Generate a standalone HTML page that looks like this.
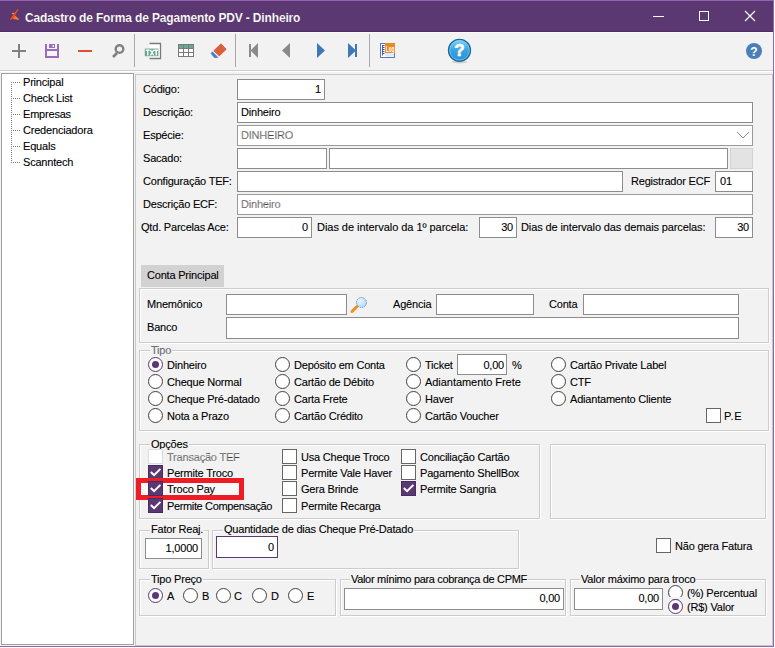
<!DOCTYPE html>
<html><head><meta charset="utf-8">
<style>
*{box-sizing:border-box;margin:0;padding:0}
html,body{width:775px;height:648px;overflow:hidden;background:#fff}
body{position:relative;font-family:"Liberation Sans",sans-serif;font-size:11px;color:#000}
.a{position:absolute}
.t{position:absolute;white-space:pre;font-size:11px;line-height:13px;letter-spacing:-0.2px;color:#000;-webkit-text-stroke:0.1px #000}
.in{position:absolute;background:#fff;border:1px solid #8c8c8c}
.g{position:absolute;border:1px solid #cccccc;box-shadow:inset 1px 1px 0 #fff,1px 1px 0 #fff}
.cap{position:absolute;white-space:pre;font-size:11px;line-height:13px;letter-spacing:-0.2px;color:#000;-webkit-text-stroke:0.1px #000;background:#f2f2f2;padding:0 1px}
.rd{position:absolute;width:15px;height:15px;border-radius:50%;border:1px solid #404040;background:#fff}
.rs{position:absolute;width:15px;height:15px;border-radius:50%;border:1px solid #5c3872;background:#fff}
.rs::after{content:"";position:absolute;left:3px;top:3px;width:7px;height:7px;border-radius:50%;background:#5c3872}
.cb{position:absolute;width:15px;height:15px;border:1px solid #666;background:#fff}
.ck{position:absolute;width:15px;height:15px;background:#5c3872;border:1px solid #4a2a62}
.ck svg{position:absolute;left:-1px;top:-1px}
.sep{position:absolute;width:1px;background:#a8a8a8;top:34px;height:33px}
.r{text-align:right}
</style></head><body>
<!-- window background -->
<div class="a" style="left:0;top:0;width:773px;height:646px;background:#f2f2f2"></div>
<!-- title bar -->
<div class="a" style="left:0;top:0;width:773px;height:32px;background:#5c3872;border-top:1px solid #9660b8;border-bottom:1px solid #4f2e66"></div>
<div class="a" style="left:0;top:32px;width:773px;height:1px;background:#fafafa"></div>
<div class="a" style="left:773px;top:0;width:1px;height:647px;background:#9660b8"></div>
<div class="a" style="left:0;top:646px;width:774px;height:1px;background:#9660b8"></div>
<svg class="a" style="left:6px;top:6px" width="18" height="18" viewBox="6 6 18 18">
<defs><linearGradient id="lg" x1="0" y1="0" x2="1" y2="0"><stop offset="0" stop-color="#f04a22"/><stop offset="1" stop-color="#fbbd1e"/></linearGradient></defs>
<path d="M12.2 18.9 L14.6 15 L19.4 19.7 Z" fill="url(#lg)"/>
<path d="M11.3 13.6 Q12.6 12.4 14.8 13.1 L14.2 14.3 Z" fill="#f9b01e"/>
<path d="M17.6 8.9 L18.5 9.7 L14.8 15.4 L10.9 20 L9.9 19.3 L13.4 14.6 Z" fill="#f24c22"/>
</svg>
<div class="t" style="left:25px;top:11px;font-size:12px;font-weight:bold;color:#fff;line-height:14px;letter-spacing:-0.15px">Cadastro de Forma de Pagamento PDV - Dinheiro</div>
<!-- window controls -->
<div class="a" style="left:653px;top:16px;width:11px;height:1px;background:#fff"></div>
<div class="a" style="left:699px;top:11px;width:10px;height:10px;border:1px solid #fff"></div>
<svg class="a" style="left:744px;top:10px" width="12" height="12" viewBox="0 0 12 12"><path d="M1 1 L11 11 M11 1 L1 11" stroke="#fff" stroke-width="1.2"/></svg>

<!-- toolbar -->
<svg class="a" style="left:0;top:33px" width="773" height="40" viewBox="0 33 773 40">
<!-- plus -->
<rect x="12" y="50" width="14" height="2" fill="#808080"/><rect x="18" y="44" width="2" height="14" fill="#808080"/>
<!-- save -->
<rect x="45" y="44" width="14" height="14" fill="#9a6cbc"/>
<rect x="47" y="51" width="10" height="5" fill="#f4f4f4"/>
<rect x="47" y="44" width="10" height="5" fill="#f4f4f4"/>
<rect x="49" y="44" width="6" height="4" fill="#9a6cbc"/>
<rect x="52.5" y="45" width="1.5" height="2" fill="#f4f4f4"/>
<!-- minus -->
<rect x="78" y="50" width="14" height="2" fill="#dc5030"/>
<!-- search -->
<circle cx="119.5" cy="49" r="3.8" fill="none" stroke="#808080" stroke-width="2.4"/>
<path d="M113 57 L117 53" stroke="#808080" stroke-width="2.6"/>
<!-- TXT -->
<path d="M149.5 43.5 H160.5 V58.5 H149.5" fill="#fff" stroke="#7a7a7a" stroke-width="1.3"/>
<rect x="144.8" y="48.6" width="13.6" height="7.6" fill="#6aa88e"/>
<path d="M145.8 50.3 H149.6 M147.7 50.3 V55.5 M150.4 49.8 L153.8 55.5 M153.8 49.8 L150.4 55.5 M154.3 50.3 H158.1 M156.2 50.3 V55.5" stroke="#fff" stroke-width="1.4" fill="none"/>
<!-- grid -->
<rect x="178.5" y="44.5" width="15" height="12" fill="#fff" stroke="#7a7a7a"/>
<rect x="179" y="45" width="14" height="3" fill="#6aa88e"/>
<path d="M178.5 48.5 H193.5 M178.5 52.5 H193.5 M183.5 44.5 V56.5 M188.5 44.5 V56.5" stroke="#7a7a7a"/>
<!-- eraser -->
<path d="M214.2 50.8 L221 44.2 L225.8 49.2 L219.2 55.6 Z" fill="#d95f3e" stroke="#d95f3e" stroke-width="1.2" stroke-linejoin="round"/><path d="M211 53.3 L212.4 51.8 L218 57.6 L214.2 57.6 Z" fill="#3f7dc0" stroke="#3f7dc0" stroke-width="0.6" stroke-linejoin="round"/>
<!-- nav -->
<rect x="249" y="44" width="2" height="13" fill="#8a8a8a"/><path d="M250.5 50.5 L258 43 V58 Z" fill="#8a8a8a"/>
<path d="M282 50.5 L290 43 V58 Z" fill="#8a8a8a"/>
<path d="M317 43 L325 50.5 L317 58 Z" fill="#3e78b8"/>
<path d="M348 43 L356 50.5 L348 58 Z" fill="#3e78b8"/><rect x="355" y="44" width="2" height="13" fill="#3e78b8"/>
<!-- log -->
<rect x="380.5" y="43.5" width="14" height="14" fill="#fff" stroke="#5a78c0"/>
<rect x="385" y="53" width="9" height="3.5" fill="#dde8f8"/>
<path d="M382.5 45 V55.5" stroke="#4060b0" stroke-width="1"/><path d="M383 45.5 H384.5 M383 47.5 H384.5 M383 49.5 H384.5 M383 51.5 H384.5 M383 53.5 H384.5" stroke="#3050a0" stroke-width="1"/>
<rect x="385" y="43" width="10" height="10" fill="#e88a20"/>
<text x="385.8" y="51.6" font-family="Liberation Sans" font-size="9" font-weight="bold" fill="#fff" textLength="8.6" lengthAdjust="spacingAndGlyphs">Log</text>
<!-- help big -->
<defs><linearGradient id="hb" x1="0" y1="0" x2="0" y2="1"><stop offset="0" stop-color="#7fd4f6"/><stop offset="0.5" stop-color="#3aa4e0"/><stop offset="1" stop-color="#2d8ed2"/></linearGradient></defs>
<ellipse cx="459.5" cy="62" rx="8" ry="1.5" fill="#d8d0c8"/>
<circle cx="459.5" cy="50.3" r="11" fill="url(#hb)" stroke="#176a9e" stroke-width="1.3"/>
<circle cx="459.5" cy="50.3" r="9.8" fill="none" stroke="#8adcf8" stroke-width="0.8" opacity="0.7"/><text x="459.6" y="56.4" font-family="Liberation Sans" font-size="16.5" font-weight="bold" fill="#fff" stroke="#fff" stroke-width="0.7" text-anchor="middle">?</text>
<!-- help small -->
<circle cx="754" cy="51" r="8" fill="#4a80b8"/>
<text x="754" y="55.5" font-family="Liberation Sans" font-size="12" font-weight="bold" fill="#fff" text-anchor="middle">?</text>
</svg>
<div class="sep" style="left:134px"></div>
<div class="sep" style="left:235px"></div>
<div class="sep" style="left:369px"></div>
<div class="a" style="left:0;top:70px;width:773px;height:1px;background:#cfcfcf"></div>
<div class="a" style="left:0;top:71px;width:773px;height:1px;background:#fff"></div>

<!-- tree panel -->
<div class="a" style="left:1px;top:73px;width:133px;height:572px;background:#fff;border:1px solid #a0a0a0"></div>
<svg class="a" style="left:0;top:73px" width="40" height="100" viewBox="0 73 40 100">
<path d="M11.5 82 V162 M11 82.5 H20 M11 98.5 H20 M11 114.5 H20 M11 130.5 H20 M11 146.5 H20 M11 162.5 H20" stroke="#808080" stroke-dasharray="1 1"/>
</svg>
<div class="t" style="left:23px;top:76px">Principal</div>
<div class="t" style="left:23px;top:92px">Check List</div>
<div class="t" style="left:23px;top:108px">Empresas</div>
<div class="t" style="left:23px;top:124px">Credenciadora</div>
<div class="t" style="left:23px;top:140px">Equals</div>
<div class="t" style="left:23px;top:156px">Scanntech</div>

<!-- main panel -->
<div class="a" style="left:135px;top:74px;width:638px;height:572px;background:#f2f2f2;border:1px solid #c8c8c8"></div>

<!-- header fields -->
<div class="t" style="left:143px;top:83px">Código:</div>
<div class="in" style="left:237px;top:79px;width:88px;height:21px"></div>
<div class="t r" style="left:237px;top:83px;width:84px">1</div>

<div class="t" style="left:143px;top:106px">Descrição:</div>
<div class="in" style="left:237px;top:102px;width:516px;height:21px"></div>
<div class="t" style="left:241px;top:106px">Dinheiro</div>

<div class="t" style="left:143px;top:129px">Espécie:</div>
<div class="in" style="left:237px;top:125px;width:516px;height:21px;border-color:#9a9a9a"></div>
<div class="t" style="left:241px;top:129px;color:#8c8c8c">DINHEIRO</div>
<svg class="a" style="left:736px;top:131px" width="14" height="8" viewBox="736 131 14 8"><path d="M737 132 L743 138 L749 132" fill="none" stroke="#888" stroke-width="1"/></svg>

<div class="t" style="left:143px;top:152px">Sacado:</div>
<div class="in" style="left:237px;top:148px;width:90px;height:21px"></div>
<div class="in" style="left:329px;top:148px;width:399px;height:21px"></div>
<div class="a" style="left:730px;top:148px;width:23px;height:21px;background:#e3e3e3;border:1px solid #d2d2d2"></div>

<div class="t" style="left:143px;top:175px">Configuração TEF:</div>
<div class="in" style="left:237px;top:171px;width:386px;height:21px"></div>
<div class="t" style="left:631px;top:175px">Registrador ECF</div>
<div class="in" style="left:715px;top:171px;width:38px;height:21px"></div>
<div class="t" style="left:720px;top:175px">01</div>

<div class="t" style="left:143px;top:198px">Descrição ECF:</div>
<div class="in" style="left:237px;top:194px;width:516px;height:21px;border-color:#9a9a9a"></div>
<div class="t" style="left:241px;top:198px;color:#8c8c8c">Dinheiro</div>

<div class="t" style="left:141px;top:221px">Qtd. Parcelas Ace:</div>
<div class="in" style="left:237px;top:217px;width:75px;height:21px"></div>
<div class="t r" style="left:237px;top:221px;width:71px">0</div>
<div class="t" style="left:317px;top:221px;letter-spacing:-0.04px">Dias de intervalo da 1º parcela:</div>
<div class="in" style="left:479px;top:217px;width:38px;height:21px"></div>
<div class="t r" style="left:479px;top:221px;width:34px">30</div>
<div class="t" style="left:521px;top:221px;letter-spacing:-0.12px">Dias de intervalo das demais parcelas:</div>
<div class="in" style="left:715px;top:217px;width:38px;height:21px"></div>
<div class="t r" style="left:715px;top:221px;width:34px">30</div>

<!-- tab -->
<div class="a" style="left:141px;top:265px;width:83px;height:22px;background:#d2d2d2"></div>
<div class="t" style="left:147px;top:269px">Conta Principal</div>

<!-- conta principal group -->
<div class="g" style="left:139px;top:288px;width:630px;height:55px"></div>
<div class="t" style="left:147px;top:298px">Mnemônico</div>
<div class="in" style="left:226px;top:294px;width:121px;height:21px"></div>
<svg class="a" style="left:349px;top:295px" width="20" height="19" viewBox="349 295 20 19">
<defs><radialGradient id="lens" cx="0.35" cy="0.35" r="0.7"><stop offset="0" stop-color="#e8f8ff"/><stop offset="1" stop-color="#a8dcf8"/></radialGradient></defs>
<path d="M352 311.5 L357 306.5" stroke="#e8921e" stroke-width="3" stroke-linecap="round"/>
<circle cx="361.5" cy="302.5" r="5" fill="url(#lens)" stroke="#8080c8" stroke-width="1" stroke-dasharray="1.2 0.8"/>
</svg>
<div class="t" style="left:393px;top:298px">Agência</div>
<div class="in" style="left:436px;top:294px;width:98px;height:21px"></div>
<div class="t" style="left:549px;top:298px">Conta</div>
<div class="in" style="left:583px;top:294px;width:156px;height:21px"></div>
<div class="t" style="left:147px;top:321px">Banco</div>
<div class="in" style="left:226px;top:317px;width:513px;height:22px"></div>

<!-- Tipo group -->
<div class="g" style="left:139px;top:350px;width:630px;height:81px"></div>
<div class="cap" style="left:150px;top:344px;color:#7a7a8a">Tipo</div>
<div class="rs" style="left:148px;top:357px"></div><div class="t" style="left:167px;top:359px">Dinheiro</div>
<div class="rd" style="left:148px;top:374px"></div><div class="t" style="left:167px;top:376px">Cheque Normal</div>
<div class="rd" style="left:148px;top:391px"></div><div class="t" style="left:167px;top:393px">Cheque Pré-datado</div>
<div class="rd" style="left:148px;top:408px"></div><div class="t" style="left:167px;top:410px">Nota a Prazo</div>
<div class="rd" style="left:275px;top:357px"></div><div class="t" style="left:294px;top:359px">Depósito em Conta</div>
<div class="rd" style="left:275px;top:374px"></div><div class="t" style="left:294px;top:376px">Cartão de Débito</div>
<div class="rd" style="left:275px;top:391px"></div><div class="t" style="left:294px;top:393px">Carta Frete</div>
<div class="rd" style="left:275px;top:408px"></div><div class="t" style="left:294px;top:410px">Cartão Crédito</div>
<div class="rd" style="left:406px;top:357px"></div><div class="t" style="left:425px;top:359px">Ticket</div>
<div class="in" style="left:457px;top:354px;width:50px;height:21px"></div>
<div class="t r" style="left:457px;top:359px;width:47px">0,00</div>
<div class="t" style="left:512px;top:359px">%</div>
<div class="rd" style="left:406px;top:374px"></div><div class="t" style="left:425px;top:376px;letter-spacing:-0.05px">Adiantamento Frete</div>
<div class="rd" style="left:406px;top:391px"></div><div class="t" style="left:425px;top:393px">Haver</div>
<div class="rd" style="left:406px;top:408px"></div><div class="t" style="left:425px;top:410px">Cartão Voucher</div>
<div class="rd" style="left:551px;top:357px"></div><div class="t" style="left:570px;top:359px">Cartão Private Label</div>
<div class="rd" style="left:551px;top:374px"></div><div class="t" style="left:570px;top:376px">CTF</div>
<div class="rd" style="left:551px;top:391px"></div><div class="t" style="left:570px;top:393px">Adiantamento Cliente</div>
<div class="cb" style="left:706px;top:408px"></div><div class="t" style="left:724px;top:410px;letter-spacing:0.6px">P.E</div>

<!-- Opcoes group -->
<div class="g" style="left:139px;top:444px;width:401px;height:75px"></div>
<div class="cap" style="left:150px;top:438px">Opções</div>
<div class="cb" style="left:148px;top:449px;border-color:#dcdcdc"></div><div class="t" style="left:167px;top:451px;color:#8c8c8c">Transação TEF</div>
<div class="ck" style="left:148px;top:465px"><svg width="15" height="15" viewBox="0 0 15 15"><path d="M2.8 7 L6.1 10.2 L12.4 3.9" fill="none" stroke="#fff" stroke-width="2"/></svg></div><div class="t" style="left:167px;top:467px">Permite Troco</div>
<div class="a" style="left:136px;top:478px;width:108px;height:22px;border:5px solid #ee1c24;background:#f8f8f8"></div>
<div class="ck" style="left:148px;top:481px"><svg width="15" height="15" viewBox="0 0 15 15"><path d="M2.8 7 L6.1 10.2 L12.4 3.9" fill="none" stroke="#fff" stroke-width="2"/></svg></div><div class="t" style="left:167px;top:483px">Troco Pay</div>
<div class="ck" style="left:148px;top:498px"><svg width="15" height="15" viewBox="0 0 15 15"><path d="M2.8 7 L6.1 10.2 L12.4 3.9" fill="none" stroke="#fff" stroke-width="2"/></svg></div><div class="t" style="left:167px;top:500px;letter-spacing:-0.36px">Permite Compensação</div>
<div class="cb" style="left:282px;top:449px"></div><div class="t" style="left:301px;top:451px">Usa Cheque Troco</div>
<div class="cb" style="left:282px;top:465px"></div><div class="t" style="left:301px;top:467px">Permite Vale Haver</div>
<div class="cb" style="left:282px;top:481px"></div><div class="t" style="left:301px;top:483px">Gera Brinde</div>
<div class="cb" style="left:282px;top:498px"></div><div class="t" style="left:301px;top:500px">Permite Recarga</div>
<div class="cb" style="left:401px;top:449px"></div><div class="t" style="left:420px;top:451px">Conciliação Cartão</div>
<div class="cb" style="left:401px;top:465px"></div><div class="t" style="left:420px;top:467px">Pagamento ShellBox</div>
<div class="ck" style="left:401px;top:481px"><svg width="15" height="15" viewBox="0 0 15 15"><path d="M2.8 7 L6.1 10.2 L12.4 3.9" fill="none" stroke="#fff" stroke-width="2"/></svg></div><div class="t" style="left:420px;top:483px">Permite Sangria</div>

<div class="g" style="left:550px;top:444px;width:216px;height:75px"></div>

<div class="cb" style="left:656px;top:538px"></div><div class="t" style="left:675px;top:540px">Não gera Fatura</div>

<!-- Fator group -->
<div class="g" style="left:139px;top:530px;width:70px;height:39px"></div>
<div class="cap" style="left:150px;top:523px">Fator Reaj.</div>
<div class="in" style="left:145px;top:538px;width:57px;height:21px"></div>
<div class="t r" style="left:145px;top:542px;width:53px">1,0000</div>
<div class="g" style="left:212px;top:530px;width:307px;height:39px"></div>
<div class="cap" style="left:223px;top:523px">Quantidade de dias Cheque Pré-Datado</div>
<div class="in" style="left:216px;top:536px;width:62px;height:22px;border-color:#5c3872"></div>
<div class="t r" style="left:216px;top:541px;width:58px">0</div>

<!-- bottom groups -->
<div class="g" style="left:139px;top:579px;width:197px;height:37px"></div>
<div class="cap" style="left:150px;top:573px">Tipo Preço</div>
<div class="rs" style="left:148px;top:588px"></div><div class="t" style="left:167px;top:590px">A</div>
<div class="rd" style="left:183px;top:588px"></div><div class="t" style="left:202px;top:590px">B</div>
<div class="rd" style="left:216px;top:588px"></div><div class="t" style="left:234px;top:590px">C</div>
<div class="rd" style="left:252px;top:588px"></div><div class="t" style="left:271px;top:590px">D</div>
<div class="rd" style="left:288px;top:588px"></div><div class="t" style="left:307px;top:590px">E</div>

<div class="g" style="left:340px;top:579px;width:226px;height:37px"></div>
<div class="cap" style="left:350px;top:573px;letter-spacing:-0.32px">Valor mínimo para cobrança de CPMF</div>
<div class="in" style="left:344px;top:588px;width:220px;height:22px"></div>
<div class="t r" style="left:343px;top:592px;width:217px">0,00</div>

<div class="g" style="left:570px;top:579px;width:196px;height:37px"></div>
<div class="cap" style="left:580px;top:573px">Valor máximo para troco</div>
<div class="in" style="left:574px;top:588px;width:89px;height:22px"></div>
<div class="t r" style="left:574px;top:592px;width:85px">0,00</div>
<div class="rd" style="left:668px;top:585px"></div><div class="t" style="left:687px;top:587px">(%) Percentual</div>
<div class="a" style="left:670px;top:597px;width:11px;height:2px;background:#f2f2f2"></div><div class="rs" style="left:668px;top:599px"></div><div class="t" style="left:687px;top:601px">(R$) Valor</div>
</body></html>
